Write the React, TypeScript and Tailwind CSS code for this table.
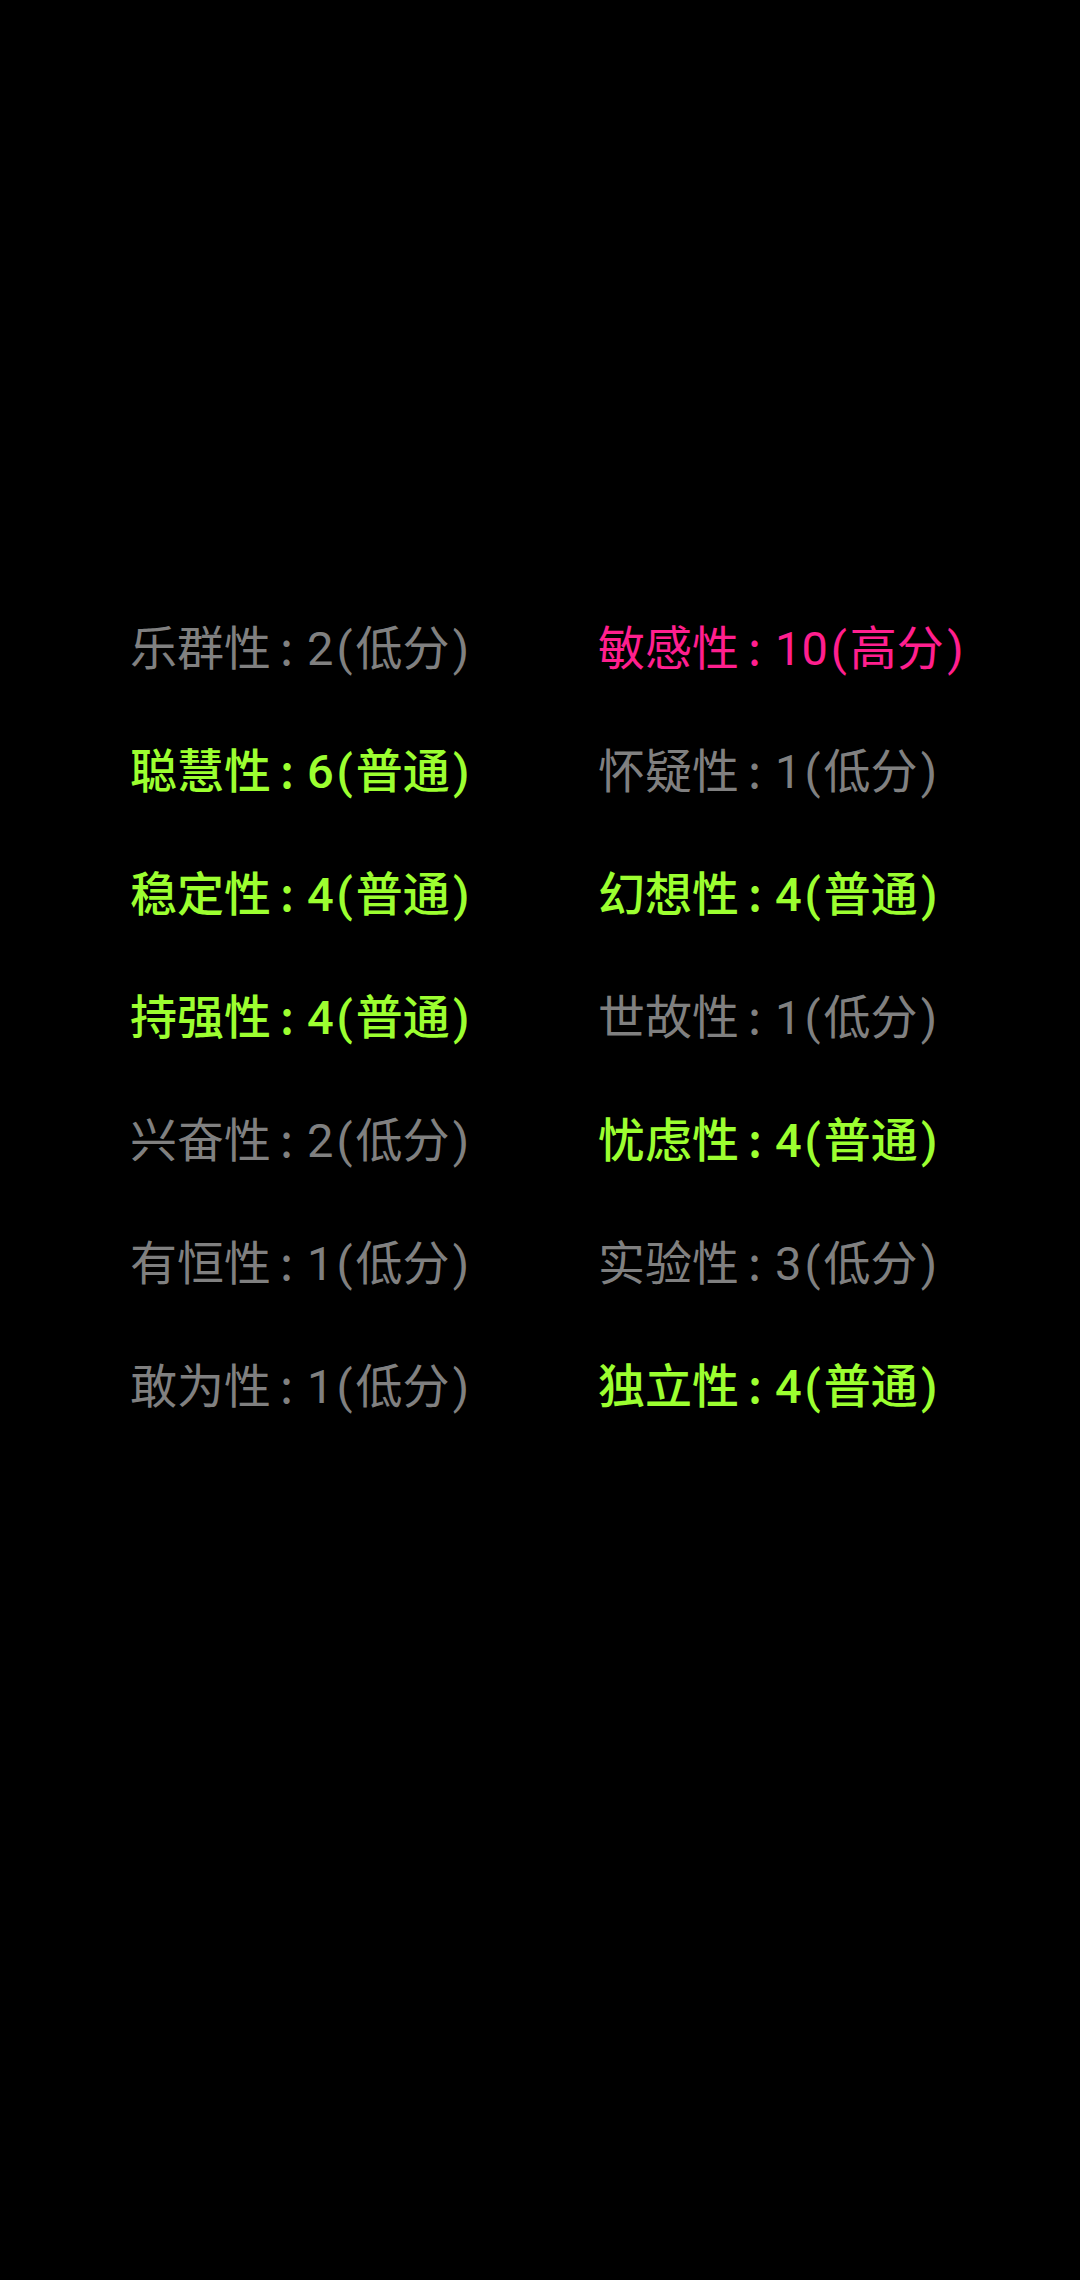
import React from "react";

type Trait = { name: string; score: number; level: "低分" | "普通" | "高分" };

const rows: [Trait, Trait][] = [
  [
    { name: "乐群性", score: 2, level: "低分" },
    { name: "敏感性", score: 10, level: "高分" },
  ],
  [
    { name: "聪慧性", score: 6, level: "普通" },
    { name: "怀疑性", score: 1, level: "低分" },
  ],
  [
    { name: "稳定性", score: 4, level: "普通" },
    { name: "幻想性", score: 4, level: "普通" },
  ],
  [
    { name: "持强性", score: 4, level: "普通" },
    { name: "世故性", score: 1, level: "低分" },
  ],
  [
    { name: "兴奋性", score: 2, level: "低分" },
    { name: "忧虑性", score: 4, level: "普通" },
  ],
  [
    { name: "有恒性", score: 1, level: "低分" },
    { name: "实验性", score: 3, level: "低分" },
  ],
  [
    { name: "敢为性", score: 1, level: "低分" },
    { name: "独立性", score: 4, level: "普通" },
  ],
];

const levelClass = {
  低分: "text-[#808080] font-normal",
  普通: "text-[#9cff30] font-medium",
  高分: "text-[#ff1f8e] font-normal",
};

const TraitText = ({ t }: { t: Trait }) => (
  <span className={levelClass[t.level]}>
    {t.name}
    <span className="inline-block w-[36px] pl-[9px]">:</span>
    <span className="font-[Roboto,sans-serif]">{t.score}</span>
    <span className="inline-block w-[22px] text-center font-[Roboto,sans-serif]">(</span>
    {t.level}
    <span className="inline-block w-[23px] text-center font-[Roboto,sans-serif]">)</span>
  </span>
);

export default function App() {
  return (
    <div
      className="w-[1080px] h-[2280px] bg-black pt-[583px] pl-[130px]"
      style={{ fontFamily: '"Noto Sans CJK SC", sans-serif' }}
    >
      <div className="flex flex-col">
        {rows.map(([l, r], i) => (
          <div key={i} className="flex flex-row h-[123px] leading-[123px] text-[47px] whitespace-nowrap">
            <div className="w-[468px]">
              <TraitText t={l} />
            </div>
            <div>
              <TraitText t={r} />
            </div>
          </div>
        ))}
      </div>
    </div>
  );
}
